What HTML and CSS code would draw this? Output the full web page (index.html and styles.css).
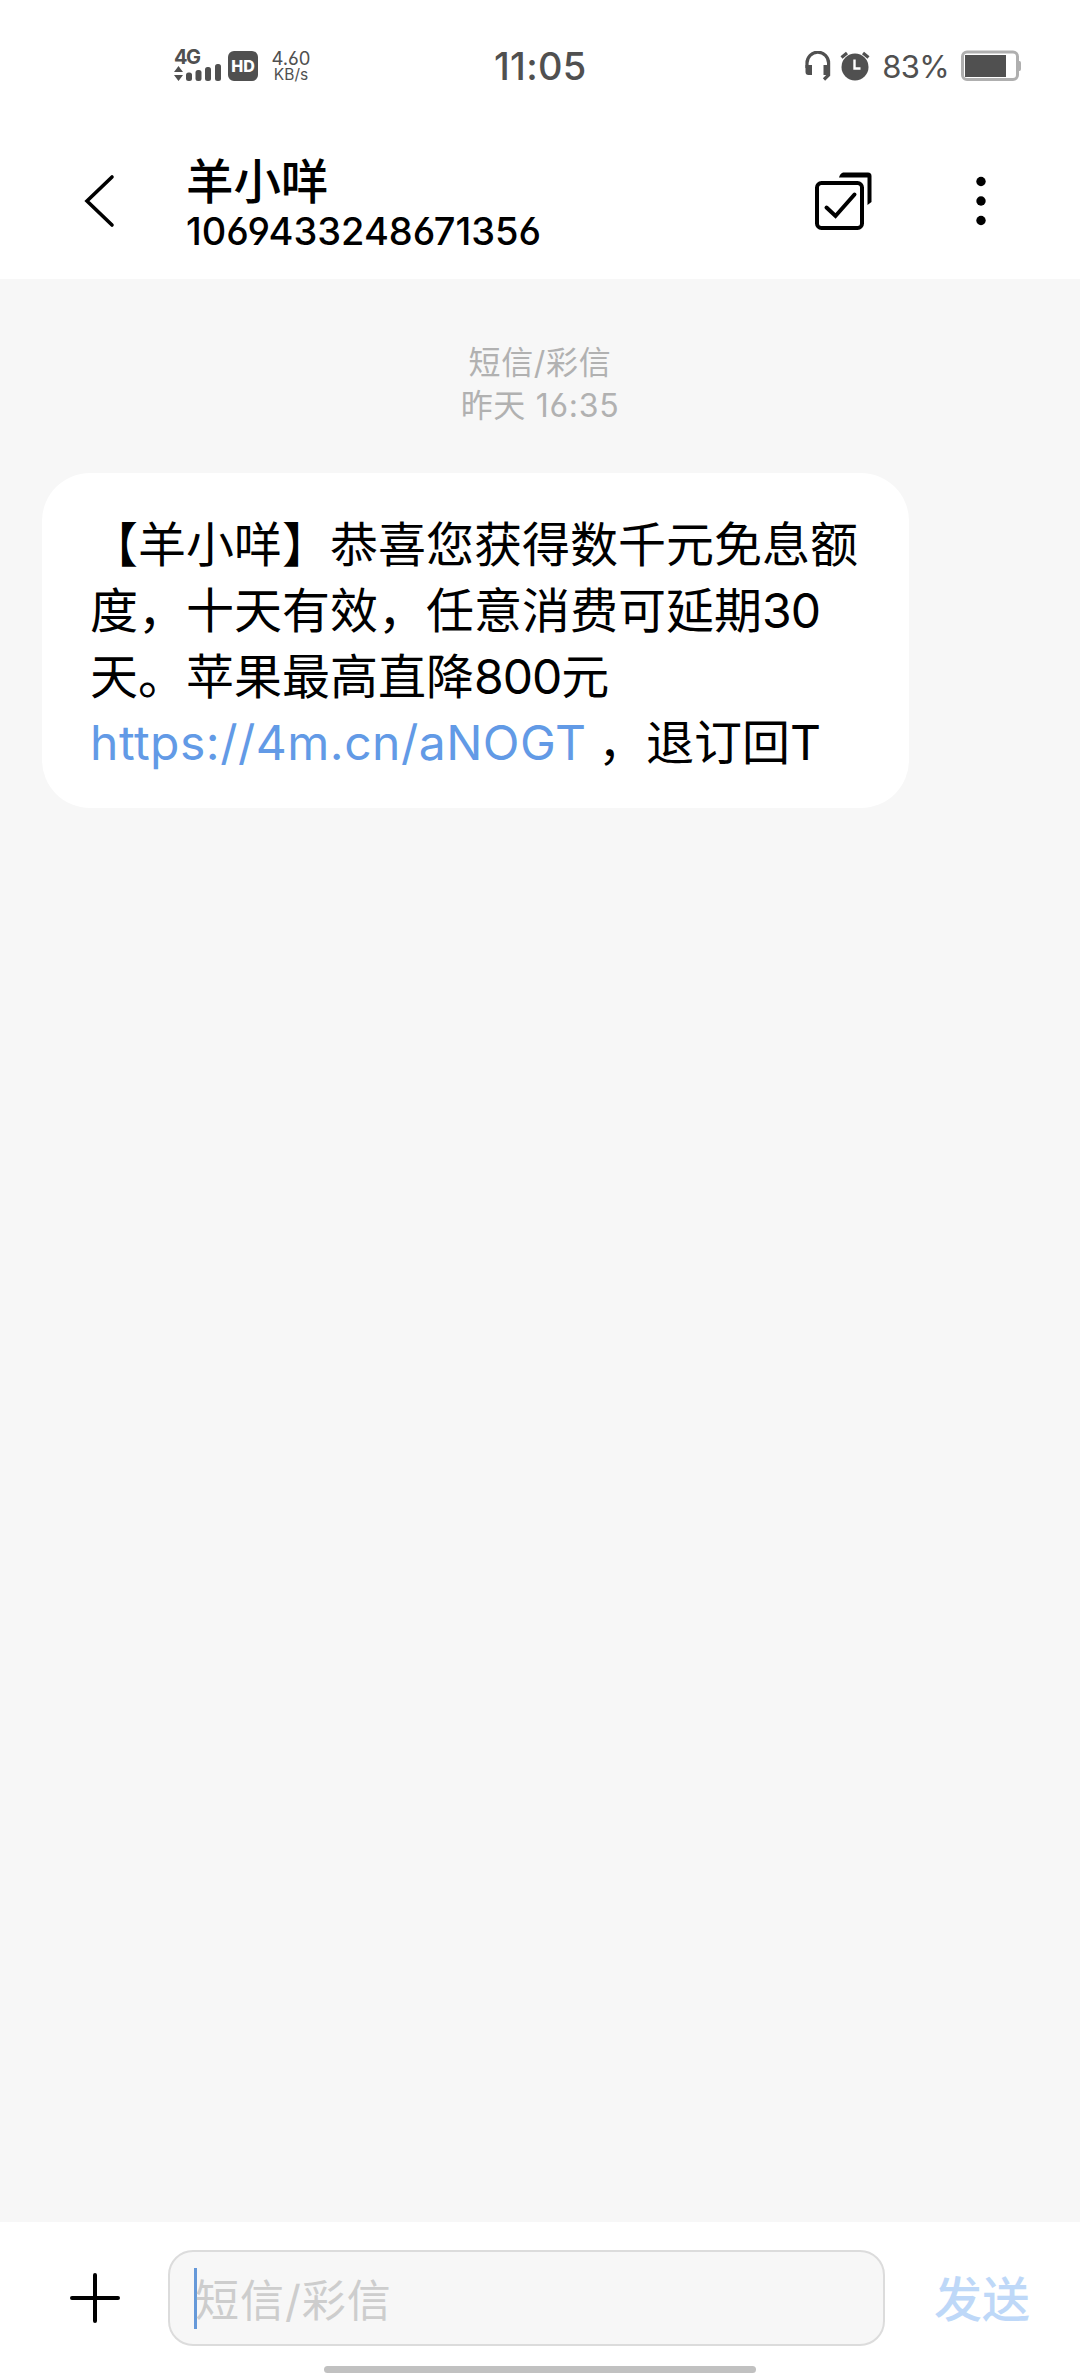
FILE: index.html
```
<!DOCTYPE html>
<html lang="zh-CN">

<head>
    <meta charset="utf-8">
    <title>羊小咩</title>
    <link rel="stylesheet" href="styles.css">
</head>

<body>
    <!-- status bar -->
    <div class="status-bar">
        <div class="status-left">
            <div class="network">
                <div class="network-type">4G</div>
                <svg width="48" height="19" viewBox="0 0 48 19">
                    <path d="M0 8L4.5 2L9 8zM0 11h9L4.500 17z" fill="#505050" />
                    <g fill="#505050">
                        <rect x="12" y="8.500" width="6" height="8.500" rx="2.500" />
                        <rect x="21.500" y="6" width="6" height="11" rx="2.500" />
                        <rect x="31" y="3" width="6" height="14" rx="2.500" />
                        <rect x="41" y="0" width="6" height="17" rx="2.500" />
                    </g>
                </svg>
            </div>
            <div class="hd">HD</div>
            <div class="speed">
                <div class="speed-num">4.60</div>
                <div class="speed-unit">KB/s</div>
            </div>
        </div>
        <div class="clock">11:05</div>
        <div class="status-right">
            <svg class="headset" width="26" height="30" viewBox="0 0 26 30">
                <path d="M2 17v-5a10.800 10.800 0 0 1 21.600 0v12l-4.600 4.500" fill="none" stroke="#505050" stroke-width="3.200" />
                <path d="M.5 14H7v10H3.500q-3 0-3-3zM18.500 14h6.500v10h-6.500z" fill="#505050" />
            </svg>
            <svg class="alarm" width="30" height="30" viewBox="0 0 30 30">
                <circle cx="15" cy="16" r="13.500" fill="#505050" />
                <path d="M1.500 6.500L7 2M28.500 6.500L23 2" stroke="#505050" stroke-width="3.200" />
                <path d="M14.500 8.500v9h6" fill="none" stroke="#fff" stroke-width="2.400" />
            </svg>
            <div class="percent">83%</div>
            <svg width="60" height="32" viewBox="0 0 60 32">
                <rect x="1.500" y="2" width="55" height="27.500" rx="4.500" fill="#fff" stroke="#afafaf" stroke-width="3" />
                <rect x="4" y="5" width="41" height="22" fill="#505050" />
                <path d="M58 11h.5q1.500 0 1.500 2v6q0 2-1.500 2H58z" fill="#afafaf" />
            </svg>
        </div>
    </div>

    <!-- title bar -->
    <div class="header">
        <svg class="back" width="32" height="54" viewBox="0 0 32 54">
            <path d="M28 3L3 27l25 24" fill="none" stroke="#000" stroke-width="3.600" stroke-linecap="round" />
        </svg>
        <div class="contact">
            <div class="contact-name">羊小咩</div>
            <div class="contact-number">1069433248671356</div>
        </div>
        <svg class="select" width="60" height="60" viewBox="0 0 60 60" fill="none" stroke="#000" stroke-width="4">
            <rect x="3" y="12" width="45" height="45" rx="4.500" />
            <path d="M12.500 36.500l9 8.500l19-21.500" stroke-linecap="round" />
            <path d="M29 1.500h25q3.500 0 3.500 3.500v26l-4 3V6.500H25q1-4 4-5z" fill="#000" stroke="none" />
        </svg>
        <svg class="more" width="12" height="50" viewBox="0 0 12 50">
            <circle cx="6" cy="5.500" r="4.700" />
            <circle cx="6" cy="25" r="4.700" />
            <circle cx="6" cy="44.500" r="4.700" />
        </svg>
    </div>

    <!-- messages -->
    <div class="messages">
        <div class="msg-time">
            <div>短信/彩信</div>
            <div>昨天 16:35</div>
        </div>
        <div class="bubble">
            【羊小咩】恭喜您获得数千元免息额<br>
            度，十天有效，任意消费可延期<span class="num">30</span><br>
            天。苹果最高直降<span class="num">800</span>元<br>
            <a class="link">https://4m.cn/aNOGT</a> ，退订回T
        </div>
    </div>

    <!-- compose bar -->
    <div class="compose">
        <svg class="add" width="50" height="50" viewBox="0 0 50 50">
            <path d="M25 2v46M2 25h46" stroke="#000" stroke-width="4" stroke-linecap="round" />
        </svg>
        <div class="input">
            <span class="caret"></span>
            <span class="placeholder">短信/彩信</span>
        </div>
        <div class="send">发送</div>
        <div class="home-bar"></div>
    </div>
</body>

</html>
```
FILE: styles.css
```
* {
    margin: 0;
    padding: 0;
    box-sizing: border-box;
}

body {
    width: 1080px;
    height: 2376px;
    display: flex;
    flex-direction: column;
    background: #fff;
    color: #000;
    font-family: Inter, "Noto Sans CJK SC", sans-serif;
    font-feature-settings: "cv03", "cv04";
    text-spacing-trim: space-all;
    overflow: hidden;
}

svg {
    display: block;
    flex: none;
}

/*status bar*/

.status-bar {
    height: 132px;
    padding: 0 59px 0 174px;
    display: grid;
    grid-template-columns: 320px 1fr auto;
    align-items: center;
    color: #505050;
}

.status-left,
.status-right {
    display: flex;
    align-items: center;
}

.network {
    width: 54px;
}

.network-type {
    font-size: 20px;
    line-height: 16px;
    font-weight: bold;
    letter-spacing: -1.500px;
    margin-bottom: -1px;
}

.hd {
    width: 30px;
    height: 30px;
    border-radius: 6px;
    background: #505050;
    color: #fff;
    font-size: 16px;
    line-height: 30px;
    font-weight: 800;
    text-align: center;
}

.speed {
    width: 42px;
    margin-left: 12px;
    text-align: center;
}

.speed-num {
    font-size: 18.500px;
    line-height: 18px;
}

.speed-unit {
    font-size: 15.500px;
    line-height: 16px;
}

.clock {
    font-size: 38px;
    font-weight: 500;
    letter-spacing: .3px;
}

.headset {
    margin-right: 9px;
}

.percent {
    font-size: 31px;
    letter-spacing: -.700px;
    margin: 0 12px 0 12px;
}

/*title bar*/

.header {
    height: 147px;
    padding: 0 93px 0 83px;
    display: flex;
    align-items: flex-start;
}

.back {
    margin: 42px 0 0 1px;
}

.contact {
    flex: 1;
    margin: 23px 0 0 70px;
}

.contact-name {
    font-size: 47.500px;
    line-height: 54px;
    font-weight: 500;
}

.contact-number {
    font-size: 38px;
    line-height: 44px;
    font-weight: 500;
}

.select {
    margin: 39px 101px 0 0;
}

.more {
    margin-top: 44px;
}

/*messages*/

.messages {
    flex: 1;
    background: #f7f7f7;
    padding: 62px 42px 0;
}

.msg-time {
    color: #b1b1b1;
    font-size: 32px;
    line-height: 43px;
    letter-spacing: .700px;
    text-align: center;
}

.bubble {
    width: 867px;
    height: 335px;
    margin-top: 46px;
    padding: 39px 0 0 48px;
    border-radius: 48px;
    background: #fff;
    font-size: 48px;
    line-height: 66px;
    white-space: nowrap;
}

.num {
    letter-spacing: -1px;
}

.link {
    margin-right: -2px;
    color: #629ae6;
    letter-spacing: .500px;
}

/*compose bar*/

.compose {
    position: relative;
    height: 154px;
    padding: 28px 50px 0 70px;
    display: flex;
    align-items: flex-start;
}

.add {
    margin: 23px 48px 0 0;
}

.input {
    width: 717px;
    height: 96px;
    padding-left: 24px;
    display: flex;
    align-items: center;
    border: 2px solid #dcdcdc;
    border-radius: 25px;
    background: #f7f7f7;
}

.caret {
    width: 3px;
    height: 61px;
    background: #6699d9;
}

.placeholder {
    margin-left: -2px;
    color: #cdcdcd;
    font-size: 44px;
    letter-spacing: 1px;
}

.send {
    margin-left: auto;
    color: #bed8f8;
    font-size: 48px;
    line-height: 100px;
    font-weight: 500;
}

/*gesture handle at the bottom edge*/

.home-bar {
    position: absolute;
    left: 324px;
    bottom: 3px;
    width: 432px;
    height: 7px;
    border-radius: 4px;
    background: #c1c1c1;
}
```
